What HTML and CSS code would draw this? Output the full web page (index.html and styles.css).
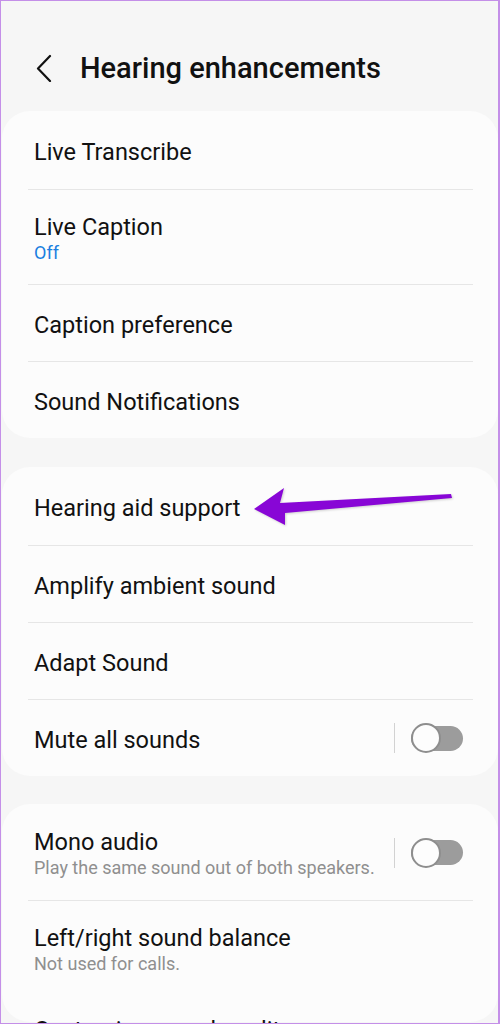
FILE: index.html
```html
<!DOCTYPE html>
<html lang="en">
<head>
<meta charset="utf-8">
<title>Hearing enhancements</title>
<link rel="stylesheet" href="styles.css">
</head>
<body>
<div class="frame">
  <header class="header">
    <svg class="back" width="16" height="28" viewBox="0 0 16 28" aria-hidden="true">
      <path d="M14 2 L2 14.5 L14 27" fill="none" stroke="#111" stroke-width="2.2" stroke-linecap="round" stroke-linejoin="round"/>
    </svg>
    <h1 class="title">Hearing enhancements</h1>
  </header>

  <section class="card">
    <div class="row"><div class="text"><div class="label">Live Transcribe</div></div></div>
    <div class="row two"><div class="text"><div class="label">Live Caption</div><div class="sub blue">Off</div></div></div>
    <div class="row"><div class="text"><div class="label">Caption preference</div></div></div>
    <div class="row"><div class="text"><div class="label">Sound Notifications</div></div></div>
  </section>

  <section class="card">
    <div class="row"><div class="text"><div class="label">Hearing aid support</div></div></div>
    <div class="row"><div class="text"><div class="label">Amplify ambient sound</div></div></div>
    <div class="row"><div class="text"><div class="label">Adapt Sound</div></div></div>
    <div class="row"><div class="text"><div class="label">Mute all sounds</div></div>
      <div class="switch-wrap"><span class="vline"></span><span class="track"><span class="knob"></span></span></div>
    </div>
  </section>

  <section class="card last">
    <div class="row two"><div class="text"><div class="label">Mono audio</div><div class="sub">Play the same sound out of both speakers.</div></div>
      <div class="switch-wrap"><span class="vline"></span><span class="track"><span class="knob"></span></span></div>
    </div>
    <div class="row two"><div class="text"><div class="label">Left/right sound balance</div><div class="sub">Not used for calls.</div></div></div>
    <div class="row plain"><div class="text"><div class="label">Customize sound quality</div></div></div>
  </section>

  <svg class="arrow" width="210" height="46" viewBox="0 0 210 46" aria-hidden="true">
    <path d="M4 25 L34 4 L30 19 L201 10 L202 14 L35 29 L35 41 Z" fill="#8806d6"/>
  </svg>
</div>
</body>
</html>
```

FILE: styles.css
```css
* { box-sizing: border-box; }
html, body { margin: 0; padding: 0; }
body {
  background: #f6f6f6;
  font-family: Roboto, "Noto Sans", "Liberation Sans", sans-serif;
  color: #111;
}
.frame {
  position: relative;
  width: 500px;
  height: 1024px;
  overflow: hidden;
  background: #f6f6f6;
  border: 1px solid #c48fe8;
  border-right-width: 2px;
}
.header {
  height: 110px;
  padding-top: 24px;
  padding-left: 35px;
  display: flex;
  align-items: center;
  gap: 28px;
}
.back { display: block; flex: none; }
.title {
  margin: 0;
  font-size: 29px;
  font-weight: 500;
  line-height: 34px;
  color: #111;
}
.card {
  background: #fcfcfc;
  border-radius: 28px;
  margin: 0 0 29px 1px;
  padding-top: 1px;
}
.card + .card { margin-bottom: 28px; }
.card.last { height: 218px; margin-bottom: 0; }
.row {
  display: flex;
  align-items: center;
  height: 77px;
  margin: 0 25px 0 26px;
  padding: 0 10px 0 6px;
}
.row + .row { border-top: 1px solid #e6e6e6; }
.row.two { height: 95px; }
.row.plain { border-top: none; height: 70px; }
.text { flex: 1; min-width: 0; padding-top: 3px; }
.row.two .text { padding-top: 2px; }
.row.plain .text { padding-top: 0; }
.label {
  font-size: 23.5px;
  line-height: 28px;
  color: #111;
  white-space: nowrap;
}
.sub {
  font-size: 18px;
  line-height: 22px;
  margin-top: 1px;
  color: #8f8f8f;
  white-space: nowrap;
}
.sub.blue { color: #1b7fe0; }
.switch-wrap {
  display: flex;
  align-items: center;
  gap: 16px;
  flex: none;
}
.vline {
  display: block;
  width: 1px;
  height: 30px;
  background: #d2d2d2;
}
.track {
  display: flex;
  align-items: center;
  width: 52px;
  height: 25px;
  border-radius: 13px;
  background: #9c9c9c;
}
.knob {
  display: block;
  width: 30px;
  height: 30px;
  border-radius: 50%;
  background: #fdfdfd;
  border: 2px solid #8e8e8e;
  flex: none;
}
.arrow {
  position: absolute;
  left: 249px;
  top: 483px;
  filter: drop-shadow(1px 1px 1px rgba(0,0,0,0.18));
}
```
